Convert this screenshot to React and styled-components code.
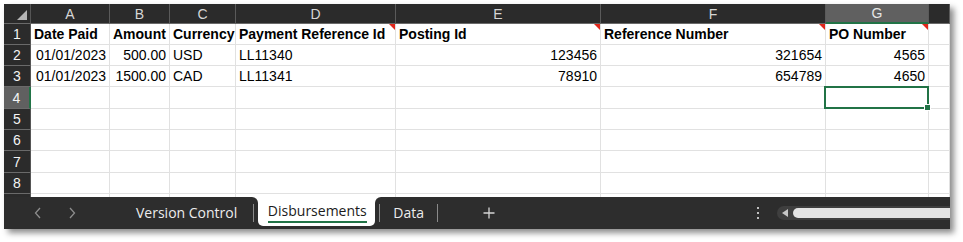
import React from "react";
import styled, { createGlobalStyle, css } from "styled-components";

const Global = createGlobalStyle`
  html, body { margin: 0; padding: 0; background: #ffffff; }
  body { font-family: "Liberation Sans", Arial, sans-serif; }
`;

const Page = styled.div`
  padding: 4px;
  width: 963px;
  height: 242px;
  box-sizing: border-box;
`;

const Frame = styled.div`
  width: 946px;
  height: 225px;
  display: flex;
  flex-direction: column;
  overflow: hidden;
  box-shadow: 4px 4px 6px rgba(0, 0, 0, 0.45);
  background: #ffffff;
`;

const Sheet = styled.div`
  display: grid;
  grid-template-columns: 27px 79px 60px 66px 160px 205px 225px 103px 21px;
  grid-template-rows: 20px 21px 21px 21px 22px 21px 21px 22px 21px 21px;
  height: 193px;
  overflow: hidden;
  flex: 0 0 auto;
`;

const Corner = styled.div`
  background: #2b2b2b;
  position: relative;
  border-right: 1px solid #555;
  border-bottom: 1px solid #6a6a6a;
  box-sizing: border-box;
  &::after {
    content: "";
    position: absolute;
    right: 3px;
    bottom: 3px;
    width: 0;
    height: 0;
    border-left: 10px solid transparent;
    border-bottom: 10px solid #b4b4b4;
  }
`;

const ColHeader = styled.div`
  background: ${(p) => (p.$active ? "#606060" : "#2b2b2b")};
  color: ${(p) => (p.$active ? "#e6e6e6" : "#d6d6d6")};
  font-size: 14px;
  display: flex;
  align-items: center;
  justify-content: center;
  box-sizing: border-box;
  border-right: 1px solid #5a5a5a;
  border-bottom: ${(p) => (p.$active ? "2px solid #217346" : "1px solid #6a6a6a")};
`;

const RowHeader = styled.div`
  background: ${(p) => (p.$active ? "#606060" : "#2b2b2b")};
  color: #f4f4f4;
  font-size: 14px;
  display: flex;
  align-items: center;
  justify-content: center;
  box-sizing: border-box;
  border-bottom: 1px solid #6a6a6a;
  border-right: ${(p) => (p.$active ? "2px solid #217346" : "1px solid #555")};
`;

const Cell = styled.div`
  position: relative;
  box-sizing: border-box;
  border-right: 1px solid #e1e1e1;
  border-bottom: 1px solid #e1e1e1;
  font-size: 14px;
  color: #000;
  font-weight: ${(p) => (p.$bold ? 700 : 400)};
  display: flex;
  align-items: center;
  justify-content: ${(p) => (p.$align === "right" ? "flex-end" : "flex-start")};
  padding: 0 3px 0 3px;
  white-space: nowrap;
  overflow: visible;
  ${(p) =>
    p.$comment &&
    css`
      &::before {
        content: "";
        position: absolute;
        top: 0;
        right: 0;
        border-left: 6px solid transparent;
        border-top: 6px solid #e0261b;
      }
    `}
  ${(p) =>
    p.$selected &&
    css`
      &::after {
        content: "";
        position: absolute;
        left: -2px;
        top: -1px;
        right: -1px;
        bottom: -1px;
        border: 2px solid #217346;
        z-index: 2;
      }
    `}
`;

const FillHandle = styled.span`
  position: absolute;
  right: -3px;
  bottom: -3px;
  width: 5px;
  height: 5px;
  background: #217346;
  border: 1px solid #fff;
  z-index: 3;
`;

const TabBar = styled.div`
  flex: 1 1 auto;
  display: flex;
  background: #ffffff;
  font-family: "Open Sans", "Noto Sans", sans-serif;
  font-size: 14px;
`;

const BarPart = styled.div`
  background: #2d2d2d;
  display: flex;
  align-items: center;
  border-top-right-radius: ${(p) => (p.$side === "left" ? "6px" : "0")};
  border-top-left-radius: ${(p) => (p.$side === "right" ? "6px" : "0")};
  padding-left: ${(p) => (p.$side === "left" ? "17px" : "0")};
  flex: ${(p) => (p.$side === "right" ? "1 1 auto" : "0 0 auto")};
  overflow: hidden;
  padding-bottom: 1px;
`;

const NavButton = styled.div`
  width: 34px;
  display: flex;
  justify-content: center;
  align-items: center;
`;

const SheetTab = styled.div`
  color: #ececec;
  padding: 0 ${(p) => p.$pad || 16}px;
  margin-left: ${(p) => p.$offset || 0}px;
  line-height: 20px;
  white-space: nowrap;
`;

const TabSep = styled.div`
  width: 1px;
  height: 18px;
  background: #8a8a8a;
  margin: 0 ${(p) => p.$right || 0}px 0 ${(p) => p.$left || 0}px;
`;

const ActiveSlot = styled.div`
  background: #2d2d2d;
  display: flex;
`;

const ActiveTab = styled.div`
  background: #ffffff;
  height: 29px;
  width: 117px;
  box-sizing: border-box;
  border-radius: 0 0 5px 5px;
  display: flex;
  justify-content: center;
  align-items: center;
  padding-bottom: 1px;
`;

const ActiveLabel = styled.span`
  color: #1b1b1b;
  line-height: 20px;
  border-bottom: 2px solid #217346;
  padding-top: 2px;
  margin-left: 1px;
`;

const PlusButton = styled.div`
  width: 30px;
  margin-left: 36px;
  display: flex;
  justify-content: center;
  align-items: center;
`;

const Spacer = styled.div`
  flex: 1 1 auto;
`;

const Kebab = styled.div`
  width: 20px;
  display: flex;
  flex-direction: column;
  align-items: center;
  gap: 3px;
  margin-right: 9px;
  margin-top: 1px;
`;

const Dot = styled.span`
  width: 2px;
  height: 2px;
  background: #f0f0f0;
  border-radius: 1px;
`;

const ScrollTrack = styled.div`
  width: 190px;
  margin-right: -17px;
  height: 14px;
  background: #3f3f3f;
  border-radius: 7px 0 0 7px;
  display: flex;
  align-items: center;
  padding-left: 5px;
  box-sizing: border-box;
  flex: 0 0 auto;
`;

const ScrollArrow = styled.span`
  width: 0;
  height: 0;
  border-top: 4px solid transparent;
  border-bottom: 4px solid transparent;
  border-right: 6px solid #c8c8c8;
`;

const ScrollThumb = styled.span`
  flex: 1 1 auto;
  height: 10px;
  margin-left: 5px;
  background: #e4e4e4;
  border-radius: 5px 0 0 5px;
`;

const Chevron = ({ dir }) => (
  <svg width="8" height="12" viewBox="0 0 8 12">
    <polyline
      points={dir === "left" ? "6,1 1.5,6 6,11" : "2,1 6.5,6 2,11"}
      fill="none"
      stroke="#8c8c8c"
      strokeWidth="1.3"
    />
  </svg>
);

const Plus = () => (
  <svg width="12" height="12" viewBox="0 0 12 12">
    <path d="M6 0.5V11.5M0.5 6H11.5" stroke="#d4d4d4" strokeWidth="1.3" />
  </svg>
);

const columns = ["A", "B", "C", "D", "E", "F", "G", ""];
const activeCol = 6;
const activeRow = 4;

const data = [
  {
    bold: true,
    cells: ["Date Paid", "Amount", "Currency", "Payment Reference Id", "Posting Id", "Reference Number", "PO Number", ""],
    align: ["left", "left", "left", "left", "left", "left", "left", "left"],
    comments: [3, 4, 5, 6],
  },
  {
    cells: ["01/01/2023", "500.00", "USD", "LL11340", "123456", "321654", "4565", ""],
    align: ["right", "right", "left", "left", "right", "right", "right", "left"],
  },
  {
    cells: ["01/01/2023", "1500.00", "CAD", "LL11341", "78910", "654789", "4650", ""],
    align: ["right", "right", "left", "left", "right", "right", "right", "left"],
  },
];

const visibleRows = 8;
const totalRows = 9;

export default function App() {
  const rows = [];
  for (let r = 1; r <= totalRows; r++) {
    const d = data[r - 1];
    rows.push(
      <RowHeader key={`rh${r}`} $active={r === activeRow}>
        {r <= visibleRows ? r : ""}
      </RowHeader>
    );
    columns.forEach((_, c) => {
      const selected = r === activeRow && c === activeCol;
      rows.push(
        <Cell
          key={`c${r}-${c}`}
          $bold={d && d.bold}
          $align={d ? d.align[c] : "left"}
          $comment={d && d.comments && d.comments.includes(c)}
          $selected={selected}
        >
          {d ? d.cells[c] : ""}
          {selected && <FillHandle />}
        </Cell>
      );
    });
  }

  return (
    <>
      <Global />
      <Page>
        <Frame>
          <Sheet>
            <Corner />
            {columns.map((c, i) => (
              <ColHeader key={`h${i}`} $active={i === activeCol}>
                {c}
              </ColHeader>
            ))}
            {rows}
          </Sheet>
          <TabBar>
            <BarPart $side="left">
              <NavButton>
                <Chevron dir="left" />
              </NavButton>
              <NavButton>
                <Chevron dir="right" />
              </NavButton>
              <SheetTab $offset={31}>Version Control</SheetTab>
              <TabSep $right={4} />
            </BarPart>
            <ActiveSlot>
              <ActiveTab>
                <ActiveLabel>Disbursements</ActiveLabel>
              </ActiveTab>
            </ActiveSlot>
            <BarPart $side="right">
              <TabSep $left={4} />
              <SheetTab $pad={13}>Data</SheetTab>
              <TabSep />
              <PlusButton>
                <Plus />
              </PlusButton>
              <Spacer />
              <Kebab>
                <Dot />
                <Dot />
                <Dot />
              </Kebab>
              <ScrollTrack>
                <ScrollArrow />
                <ScrollThumb />
              </ScrollTrack>
            </BarPart>
          </TabBar>
        </Frame>
      </Page>
    </>
  );
}
